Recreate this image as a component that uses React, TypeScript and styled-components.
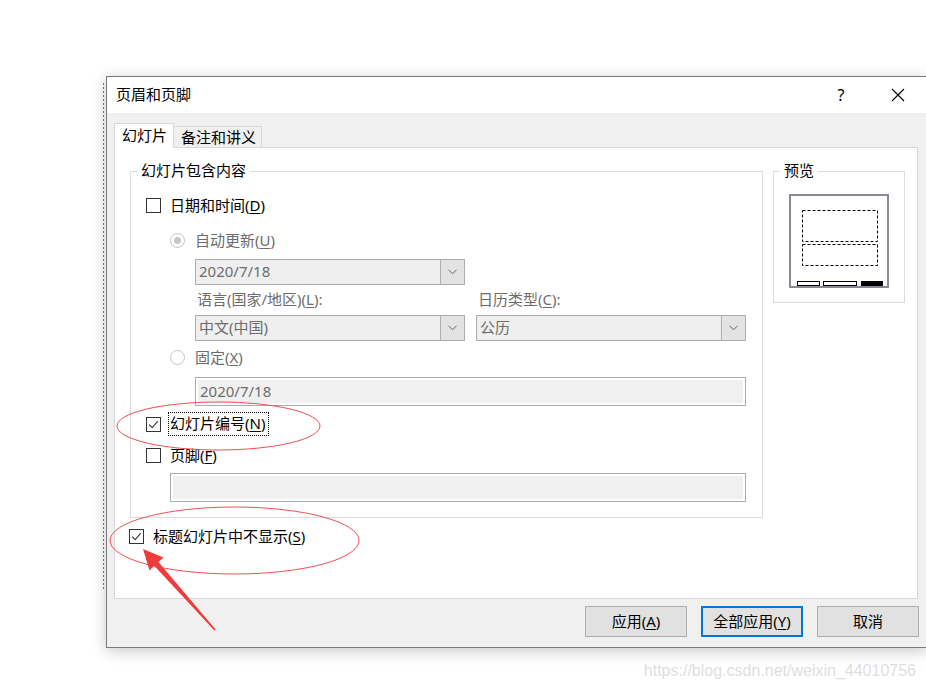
import React from 'react';
import styled, { createGlobalStyle } from 'styled-components';

const GlobalStyle = createGlobalStyle`
  html, body { margin: 0; padding: 0; background: #fff; }
  body {
    font-family: "Noto Sans", "Noto Sans CJK SC", sans-serif;
    font-size: 15px;
    color: #000;
  }
  * { box-sizing: border-box; }
  u { text-underline-offset: 2px; }
`;

const Page = styled.div`
  position: relative;
  width: 926px;
  height: 689px;
  overflow: hidden;
  padding: 76px 0 0 103px;
  display: flex;
  flex-direction: column;
`;

const Stage = styled.div`
  display: flex;
  align-items: flex-start;
`;

const DottedEdge = styled.div`
  width: 1px;
  height: 506px;
  margin: 7px 2px 0 0;
  flex-shrink: 0;
  background: repeating-linear-gradient(to bottom, #7a7a7a 0 2px, transparent 2px 4px);
`;

const Dialog = styled.div`
  width: 821px;
  height: 572px;
  flex-shrink: 0;
  border: 1px solid #7a7a7a;
  background: #f0f0f0;
  box-shadow: 0 3px 14px rgba(0, 0, 0, 0.22);
  display: flex;
  flex-direction: column;
`;

const TitleBar = styled.div`
  height: 36px;
  background: #fff;
  display: flex;
  align-items: center;
  padding-left: 9px;
  line-height: 20px;
`;

const TitleText = styled.div`
  flex: 1;
  margin-top: -2px;
`;

const TitleControls = styled.div`
  display: flex;
  gap: 11px;
  padding-right: 5px;
`;

const ControlButton = styled.div`
  width: 46px;
  height: 36px;
  display: flex;
  align-items: center;
  justify-content: center;
  font-size: 16px;
`;

const Body = styled.div`
  flex: 1;
  display: flex;
  flex-direction: column;
  padding: 10px 7px 10px 7px;
`;

const TabStrip = styled.div`
  height: 24px;
  display: flex;
  align-items: flex-end;
  position: relative;
  z-index: 1;
`;

const Tab = styled.div<{ $active?: boolean }>`
  height: ${(p) => (p.$active ? '25px' : '21px')};
  margin-bottom: ${(p) => (p.$active ? '-1px' : '0')};
  background: ${(p) => (p.$active ? '#fff' : '#f0f0f0')};
  border: 1px solid #d9d9d9;
  border-bottom: none;
  border-left: ${(p) => (p.$active ? '1px solid #d9d9d9' : 'none')};
  padding: ${(p) => (p.$active ? '0 6px 2px 7px' : '0 5px 0 7px')};
  display: flex;
  align-items: center;
  line-height: 20px;
`;

const Panel = styled.div`
  width: 804px;
  height: 452px;
  background: #fff;
  border: 1px solid #d9d9d9;
  padding: 23px 0 0 15px;
  display: flex;
  flex-direction: column;
`;

const GroupsRow = styled.div`
  display: flex;
  align-items: flex-start;
  gap: 10px;
`;

const GroupBox = styled.div<{ $w: number; $h: number }>`
  width: ${(p) => p.$w}px;
  height: ${(p) => p.$h}px;
  border: 1px solid #dcdcdc;
  display: flex;
  flex-direction: column;
  align-items: flex-start;
`;

const GroupTitle = styled.div`
  margin: -12px 0 0 6px;
  padding: 0 4px 1px;
  background: #fff;
  line-height: 20px;
`;

const Row = styled.div<{ $top: number; $indent: number; $h?: number }>`
  margin-top: ${(p) => p.$top}px;
  margin-left: ${(p) => p.$indent}px;
  height: ${(p) => p.$h ?? 20}px;
  display: flex;
  align-items: center;
  line-height: 20px;
  flex-shrink: 0;
`;

const CheckBox = styled.div`
  width: 15px;
  height: 15px;
  border: 1px solid #333;
  background: #fff;
  display: flex;
  align-items: center;
  justify-content: center;
  flex-shrink: 0;
`;

const RadioCircle = styled.div`
  width: 15px;
  height: 15px;
  border-radius: 50%;
  border: 1px solid #c4c4c4;
  background: #fff;
  display: flex;
  align-items: center;
  justify-content: center;
  flex-shrink: 0;
`;

const RadioDot = styled.div`
  width: 7px;
  height: 7px;
  border-radius: 50%;
  background: #c6c6c6;
`;

const Label = styled.span<{ $gap: number; $disabled?: boolean }>`
  margin-left: ${(p) => p.$gap}px;
  margin-top: -1px;
  color: ${(p) => (p.$disabled ? '#6d6d6d' : '#000')};
  white-space: nowrap;
`;

const FocusLabel = styled.span`
  margin-left: 7px;
  height: 24px;
  padding: 0 3px 1px 1px;
  border: 1px dotted #000;
  line-height: 21px;
  white-space: nowrap;
`;

const Select = styled.div<{ $w: number }>`
  width: ${(p) => p.$w}px;
  height: 26px;
  border: 1px solid #adadad;
  background: #efefef;
  display: flex;
  flex-shrink: 0;
`;

const SelectText = styled.div`
  flex: 1;
  padding-left: 3px;
  color: #6d6d6d;
  line-height: 23px;
  white-space: nowrap;
`;

const SelectButton = styled.div`
  width: 24px;
  border-left: 1px solid #adadad;
  background: #e3e3e3;
  display: flex;
  align-items: center;
  justify-content: center;
`;

const PairRow = styled.div<{ $top: number; $indent: number; $h: number }>`
  margin-top: ${(p) => p.$top}px;
  margin-left: ${(p) => p.$indent}px;
  height: ${(p) => p.$h}px;
  display: flex;
  gap: 11px;
  line-height: 19px;
  flex-shrink: 0;
`;

const PairLabel = styled.div`
  width: 270px;
  padding-left: 2px;
  color: #6d6d6d;
  white-space: nowrap;
`;

const Field = styled.div<{ $w: number }>`
  width: ${(p) => p.$w}px;
  height: 29px;
  border: 1px solid #adadad;
  background: #f0f0f0;
  box-shadow: inset 0 0 0 2px #fff;
  padding-left: 4px;
  color: #6d6d6d;
  line-height: 26px;
  flex-shrink: 0;
`;

const PreviewArt = styled.svg`
  display: block;
  margin: 13px 0 0 15px;
`;

const ButtonRow = styled.div`
  margin-top: 7px;
  display: flex;
  justify-content: flex-end;
  gap: 14px;
`;

const Button = styled.div<{ $default?: boolean }>`
  width: 102px;
  height: 31px;
  background: #e1e1e1;
  border: ${(p) => (p.$default ? '2px solid #0078d7' : '1px solid #adadad')};
  display: flex;
  align-items: center;
  justify-content: center;
  line-height: 20px;
  padding-bottom: 1px;
`;

const Watermark = styled.div`
  margin-top: 13px;
  padding-right: 10px;
  text-align: right;
  font-family: "Liberation Sans", Arial, sans-serif;
  font-size: 16px;
  line-height: 20px;
  color: #dedede;
`;

const Annotations = styled.svg`
  position: absolute;
  left: 0;
  top: 0;
  pointer-events: none;
`;

const Chevron = () => (
  <svg width="9" height="6" viewBox="0 0 9 6">
    <path d="M0.5 0.8 L4.5 4.8 L8.5 0.8" fill="none" stroke="#606060" strokeWidth="1" />
  </svg>
);

const Check = ({ checked }: { checked?: boolean }) => (
  <CheckBox>
    {checked && (
      <svg width="13" height="13" viewBox="0 0 13 13">
        <path d="M2.2 6.8 L5.2 9.6 L10.8 3.2" fill="none" stroke="#444" strokeWidth="1.2" />
      </svg>
    )}
  </CheckBox>
);

const Radio = ({ selected }: { selected?: boolean }) => (
  <RadioCircle>{selected && <RadioDot />}</RadioCircle>
);

export default function App() {
  return (
    <>
      <GlobalStyle />
      <Page>
        <Stage>
          <DottedEdge />
          <Dialog>
            <TitleBar>
              <TitleText>页眉和页脚</TitleText>
              <TitleControls>
                <ControlButton>?</ControlButton>
                <ControlButton>
                  <svg width="14" height="14" viewBox="0 0 14 14">
                    <path d="M1 1 L13 13 M13 1 L1 13" stroke="#000" strokeWidth="1.1" />
                  </svg>
                </ControlButton>
              </TitleControls>
            </TitleBar>
            <Body>
              <TabStrip>
                <Tab $active>幻灯片</Tab>
                <Tab>备注和讲义</Tab>
              </TabStrip>
              <Panel>
                <GroupsRow>
                  <GroupBox $w={633} $h={347}>
                    <GroupTitle>幻灯片包含内容</GroupTitle>
                    <Row $top={14} $indent={15}>
                      <Check />
                      <Label $gap={9}>
                        日期和时间(<u>D</u>)
                      </Label>
                    </Row>
                    <Row $top={15} $indent={39}>
                      <Radio selected />
                      <Label $gap={10} $disabled>
                        自动更新(<u>U</u>)
                      </Label>
                    </Row>
                    <Row $top={9} $indent={64} $h={26}>
                      <Select $w={270}>
                        <SelectText>2020/7/18</SelectText>
                        <SelectButton>
                          <Chevron />
                        </SelectButton>
                      </Select>
                    </Row>
                    <PairRow $top={5} $indent={64} $h={20}>
                      <PairLabel>
                        语言(国家/地区)(<u>L</u>):
                      </PairLabel>
                      <PairLabel>
                        日历类型(<u>C</u>):
                      </PairLabel>
                    </PairRow>
                    <PairRow $top={5} $indent={64} $h={26}>
                      <Select $w={270}>
                        <SelectText>中文(中国)</SelectText>
                        <SelectButton>
                          <Chevron />
                        </SelectButton>
                      </Select>
                      <Select $w={270}>
                        <SelectText>公历</SelectText>
                        <SelectButton>
                          <Chevron />
                        </SelectButton>
                      </Select>
                    </PairRow>
                    <Row $top={6} $indent={39}>
                      <Radio />
                      <Label $gap={10} $disabled>
                        固定(<u>X</u>)
                      </Label>
                    </Row>
                    <Row $top={10} $indent={64} $h={29}>
                      <Field $w={551}>2020/7/18</Field>
                    </Row>
                    <Row $top={6} $indent={15} $h={24}>
                      <Check checked />
                      <FocusLabel>
                        幻灯片编号(<u>N</u>)
                      </FocusLabel>
                    </Row>
                    <Row $top={9} $indent={15}>
                      <Check />
                      <Label $gap={9}>
                        页脚(<u>F</u>)
                      </Label>
                    </Row>
                    <Row $top={8} $indent={39} $h={29}>
                      <Field $w={576} />
                    </Row>
                  </GroupBox>
                  <GroupBox $w={132} $h={132}>
                    <GroupTitle>预览</GroupTitle>
                    <PreviewArt width="100" height="94" viewBox="0 0 100 94">
                      <rect x="1" y="1" width="98" height="92" fill="#fff" stroke="#878a90" strokeWidth="2" />
                      <rect x="13.5" y="16.5" width="75" height="31" fill="none" stroke="#000" strokeWidth="1" strokeDasharray="3 2" />
                      <rect x="13.5" y="50.5" width="75" height="21" fill="none" stroke="#000" strokeWidth="1" strokeDasharray="3 2" />
                      <rect x="8.5" y="87.5" width="22" height="4" fill="#fff" stroke="#000" strokeWidth="1" />
                      <rect x="34.5" y="87.5" width="33" height="4" fill="#fff" stroke="#000" strokeWidth="1" />
                      <rect x="72" y="87" width="22" height="5" fill="#000" />
                    </PreviewArt>
                  </GroupBox>
                </GroupsRow>
                <Row $top={8} $indent={-1}>
                  <Check checked />
                  <Label $gap={9}>
                    标题幻灯片中不显示(<u>S</u>)
                  </Label>
                </Row>
              </Panel>
              <ButtonRow>
                <Button>
                  应用(<u>A</u>)
                </Button>
                <Button $default>
                  全部应用(<u>Y</u>)
                </Button>
                <Button>取消</Button>
              </ButtonRow>
            </Body>
          </Dialog>
        </Stage>
        <Watermark>https://blog.csdn.net/weixin_44010756</Watermark>
        <Annotations width="926" height="689" viewBox="0 0 926 689">
          <ellipse cx="218.5" cy="426" rx="101.5" ry="24" fill="none" stroke="#ef4f52" strokeWidth="1" />
          <ellipse cx="234.5" cy="540.5" rx="124.5" ry="33.5" fill="none" stroke="#ef4f52" strokeWidth="1" />
          <polygon
            points="143,549 163.5,557.5 158.5,562 215.6,629.4 214.4,630.6 154.2,565.8 149.5,570.5"
            fill="#f03b3b"
          />
        </Annotations>
      </Page>
    </>
  );
}
